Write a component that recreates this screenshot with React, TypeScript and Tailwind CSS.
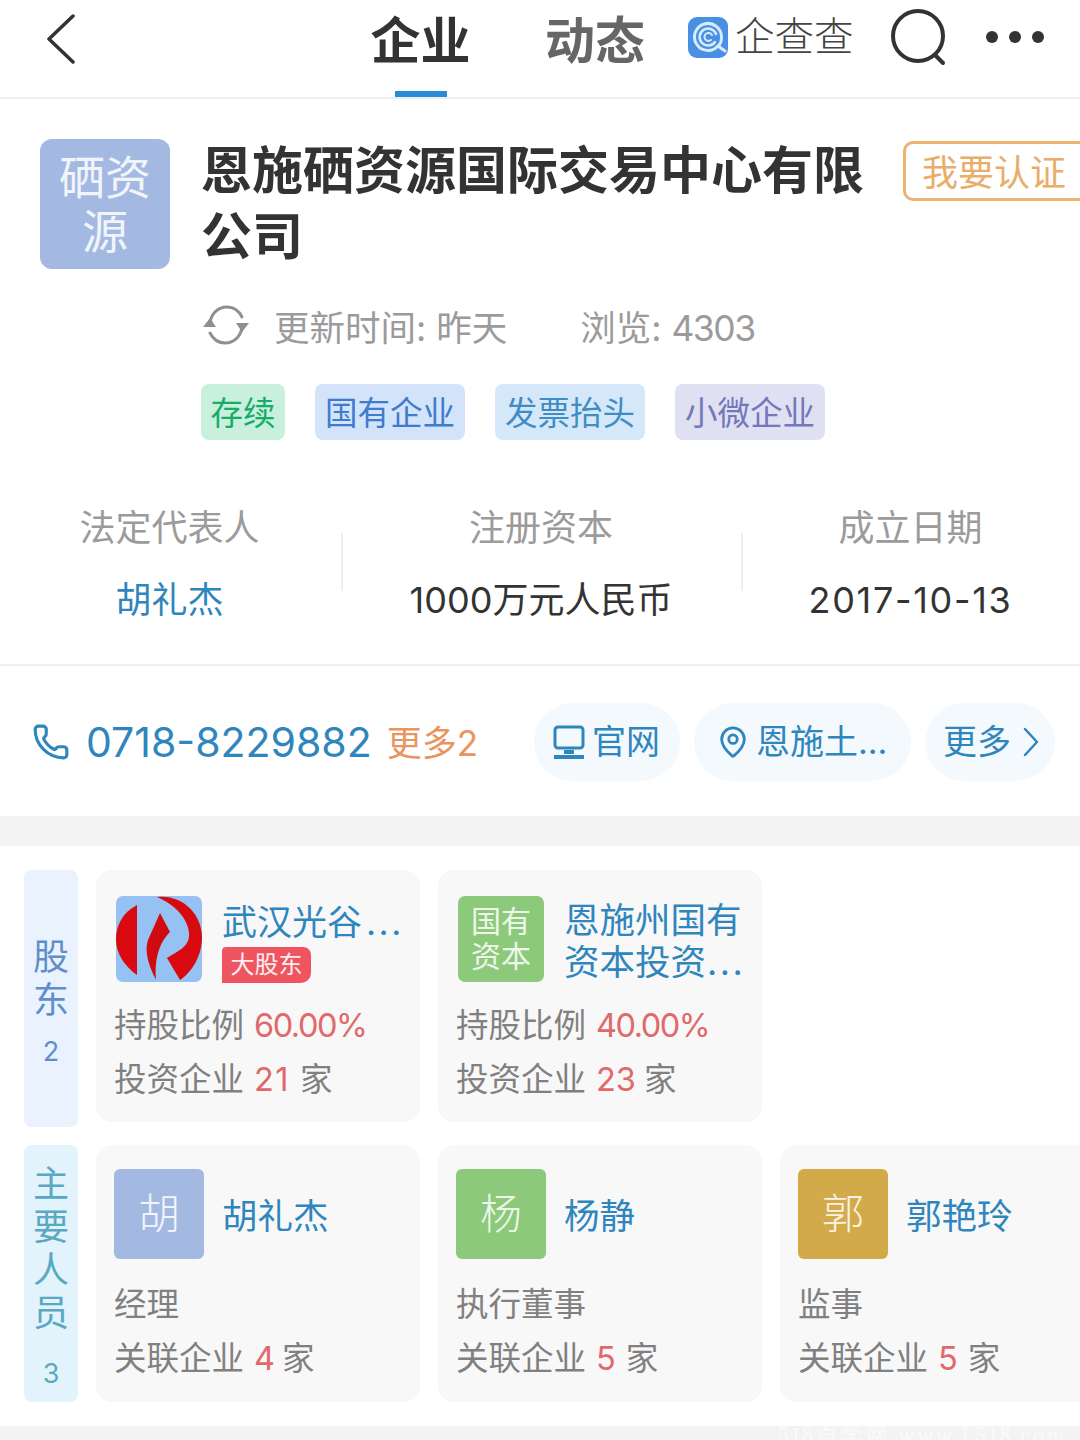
import { MapPin, Phone } from "lucide-react";

const font = { fontFamily: 'Inter, "Noto Sans CJK SC", sans-serif' };

function Tag({ text, className }: { text: string; className: string }) {
  return (
    <div className={`h-[56px] pt-[4px] rounded-[8px] flex items-center justify-center text-[32.5px] leading-none whitespace-nowrap ${className}`}>
      {text}
    </div>
  );
}

function Stat({ label, value, blue, valueClass }: { label: string; value: string; blue?: boolean; valueClass?: string }) {
  return (
    <div className="flex flex-col items-center gap-[34px]">
      <div className="text-[36px] leading-[38px] text-[#9b9b9b]">{label}</div>
      <div className={`text-[36px] leading-[38px] whitespace-nowrap ${blue ? "text-[#2f86bd]" : "text-[#333]"} ${valueClass ?? ""}`}>{value}</div>
    </div>
  );
}

function Pill({ children, className }: { children: React.ReactNode; className: string }) {
  return (
    <div className={`h-[78px] rounded-[39px] bg-[#f4f9fd] flex items-center shrink-0 text-[34px] text-[#2f86bd] whitespace-nowrap ${className}`}>
      {children}
    </div>
  );
}

function SideLabel({ chars, count, gap, className }: { chars: string[]; count: number; gap: string; className: string }) {
  return (
    <div className={`w-[54px] shrink-0 rounded-[8px] pt-[6px] flex flex-col items-center justify-center ${className}`}>
      {chars.map((c) => (
        <div key={c} className="text-[36px] leading-[43px]">{c}</div>
      ))}
      <div className={`text-[27px] leading-[32px] ${gap}`}>{count}</div>
    </div>
  );
}

function Line({ label, num, unit, numClass }: { label: string; num: string; unit?: string; numClass?: string }) {
  return (
    <div className="h-[54px] flex items-center gap-[10px] text-[32.5px] leading-none text-[#808080] whitespace-nowrap">
      <span>{label}</span>
      <span className={`text-[#e0696b] ${numClass ?? ""}`}>{num}</span>
      {unit && <span>{unit}</span>}
    </div>
  );
}

function Card({ children }: { children: React.ReactNode }) {
  return <div className="w-[324px] shrink-0 bg-[#f8f8f8] rounded-[16px] px-[18px]">{children}</div>;
}

function Person({ mark, color, name, role, count, numClass }: { mark: string; color: string; name: string; role: string; count: string; numClass?: string }) {
  return (
    <Card>
      <div className="flex items-center gap-[18px] pt-[24px]">
        <div className={`w-[90px] h-[90px] rounded-[6px] flex items-center justify-center pb-[2px] text-[42px] font-light text-white/85 ${color}`}>{mark}</div>
        <div className="pt-[6px] text-[35.5px] text-[#2f86bd]">{name}</div>
      </div>
      <div className="mt-[19px]">
        <Line label={role} num="" />
        <Line label="关联企业" num={count} unit="家" numClass={numClass} />
      </div>
    </Card>
  );
}

function HolderLogo() {
  return (
    <svg viewBox="0 0 86 86" className="w-[86px] h-[86px] shrink-0 rounded-[7px] bg-[#95c2f2]">
      <path d="M21 9 C6 17 0 30 0 43 C0 57 8 70 21 79 Z" fill="#d80a10" />
      <path d="M44 17 L54 36 C46 44 38 58 40 84 C33 70 28 56 32 44 Z" fill="#cf0a10" />
      <path d="M41 1 C66 -2 86 18 86 41 C86 60 76 76 64 84 L51 62 C64 54 74 50 73 37 C72 22 58 8 41 1 Z" fill="#d80a10" />
    </svg>
  );
}

export default function App() {
  return (
    <main className="w-[1080px] h-[1440px] overflow-hidden bg-white flex flex-col" style={font}>
      {/* top bar */}
      <header className="h-[99px] shrink-0 border-b-2 border-[#eeeeee] flex items-start">
        <svg viewBox="0 0 30 50" className="w-[30px] h-[50px] ml-[46px] mt-[14px] shrink-0" fill="none" stroke="#333" strokeWidth="3.5" strokeLinecap="round" strokeLinejoin="round">
          <path d="M27 2 L3 25 L27 48" />
        </svg>
        <div className="ml-[295px] w-[99px] h-[97px] flex flex-col items-center shrink-0">
          <div className="text-[50px] leading-[82px] font-bold text-[#333] whitespace-nowrap">企业</div>
          <div className="w-[52px] h-[6px] bg-[#2a8bd6] mt-[9px]" />
        </div>
        <div className="ml-[75px] text-[50px] leading-[82px] font-bold text-[#666] whitespace-nowrap shrink-0">动态</div>
        <svg viewBox="0 0 40 42" className="w-[40px] h-[42px] ml-[43px] mt-[17px] shrink-0" fill="none" stroke="#d6ebfb" strokeLinecap="round">
          <rect width="40" height="41" rx="9" fill="#4a90e2" stroke="none" />
          <path d="M30 29 A13.5 13.5 0 1 1 33.5 20 C33.5 24 33 27 30 29 L37 34" strokeWidth="3" />
          <path d="M27 25 A8.5 8.5 0 1 1 28 17" strokeWidth="2.5" />
          <path d="M23 23 A4 4 0 1 1 24 18" strokeWidth="2" />
        </svg>
        <div className="ml-[7px] mt-[9px] text-[39.5px] leading-[56px] font-light text-[#444] whitespace-nowrap shrink-0">企查查</div>
        <svg viewBox="0 0 58 60" className="w-[58px] h-[60px] ml-[36px] mt-[9px] shrink-0" fill="none" stroke="#333" strokeWidth="4" strokeLinecap="round">
          <circle cx="28" cy="27" r="25" />
          <path d="M45 46 L53 54" />
        </svg>
        <div className="ml-[38px] mt-[31px] flex gap-[11px] shrink-0">
          <div className="w-[12px] h-[12px] rounded-full bg-[#333]" />
          <div className="w-[12px] h-[12px] rounded-full bg-[#333]" />
          <div className="w-[12px] h-[12px] rounded-full bg-[#333]" />
        </div>
      </header>

      {/* company */}
      <section className="h-[567px] shrink-0 border-b-2 border-[#eeeeee] pt-[40px]">
        <div className="flex items-start">
          <div className="ml-[40px] w-[130px] h-[130px] rounded-[12px] bg-[#a3b9e1] flex items-center justify-center pb-[1px] text-center text-[46px] leading-[54px] text-white/85 shrink-0">
            硒资<br />源
          </div>
          <div className="ml-[31px] -mt-[1px] w-[702px] text-[51px] leading-[66px] font-bold text-[#333] shrink-0">
            恩施硒资源国际交易中心有限<br />公司
          </div>
          <div className="mt-[2px] h-[60px] w-[200px] shrink-0 border-[3px] border-[#ecb36e] rounded-[10px] pl-[16px] pt-[3px] flex items-center text-[36px] text-[#e9ad6a] whitespace-nowrap">
            我要认证
          </div>
        </div>

        <div className="flex items-center ml-[203px] mt-[31px] h-[56px] text-[35.5px] text-[#9b9b9b] whitespace-nowrap">
          <svg viewBox="0 0 46 46" className="w-[46px] h-[46px] shrink-0 -mt-[8px]" fill="none" stroke="#8f8f8f" strokeWidth="3" strokeLinecap="round">
            <path d="M7 23 C7 13 14 5 24 5 C31 5 36 9 39 15" />
            <path d="M39 23 C39 33 32 41 22 41 C15 41 10 37 7 31" />
            <path d="M0 25 L7 16 L13 25 Z" fill="#8f8f8f" stroke="none" />
            <path d="M33 21 L39 30 L46 21 Z" fill="#8f8f8f" stroke="none" />
          </svg>
          <span className="ml-[25px]">更新时间: 昨天</span>
          <span className="ml-[73px]">浏览: <span className="tracking-[-1.5px]">4303</span></span>
        </div>

        <div className="flex gap-[30px] ml-[201px] mt-[27px]">
          <Tag text="存续" className="w-[84px] bg-[#c9efdd] text-[#16ad6b]" />
          <Tag text="国有企业" className="w-[150px] bg-[#d2e3fa] text-[#3f7ccb]" />
          <Tag text="发票抬头" className="w-[150px] bg-[#d5e8f9] text-[#3f8dc4]" />
          <Tag text="小微企业" className="w-[150px] bg-[#e0e0f3] text-[#7378bb]" />
        </div>

        <div className="grid grid-cols-[341px_400px_339px] mt-[69px]">
          <div className="flex justify-center pr-[2px]"><Stat label="法定代表人" value="胡礼杰" blue /></div>
          <div className="flex justify-center relative">
            <div className="absolute left-0 top-[24px] w-[2px] h-[58px] bg-[#eeeeee]" />
            <Stat label="注册资本" value="1000万元人民币" />
          </div>
          <div className="flex justify-center relative">
            <div className="absolute left-0 top-[24px] w-[2px] h-[58px] bg-[#eeeeee]" />
            <Stat label="成立日期" value="2017-10-13" valueClass="tracking-[1.7px]" />
          </div>
        </div>
      </section>

      {/* contact */}
      <section className="h-[150px] shrink-0 flex items-center pt-[1px] pr-[25px]">
        <Phone className="w-[38px] h-[38px] ml-[32px] shrink-0 text-[#2f86bd]" strokeWidth={2} />
        <span className="ml-[16px] pt-[3px] text-[41px] text-[#2f86bd] whitespace-nowrap">0718-8229882</span>
        <span className="ml-[15px] pt-[3px] text-[35px] text-[#e8955f] whitespace-nowrap">更多2</span>
        <Pill className="ml-auto w-[146px] pl-[19px]">
          <svg viewBox="0 0 32 34" className="w-[32px] h-[34px] mr-[7px]" fill="none" stroke="#2f86bd" strokeWidth="3">
            <path d="M5 2 H27 A3 3 0 0 1 30 5 V20 A3 3 0 0 1 27 23 H5 A3 3 0 0 1 2 20 V5 A3 3 0 0 1 5 2 Z" />
            <path d="M11 27 H21 M1 32 H31" strokeWidth="4" />
          </svg>
          官网
        </Pill>
        <Pill className="ml-[14px] w-[217px] pl-[22px]">
          <MapPin className="w-[34px] h-[34px] mr-[6px]" strokeWidth={2} />
          恩施土...
        </Pill>
        <Pill className="ml-[14px] w-[130px] pl-[18px]">
          更多
          <svg viewBox="0 0 16 32" className="w-[16px] h-[32px] ml-[12px]" fill="none" stroke="#2f86bd" strokeWidth="2.5" strokeLinecap="round" strokeLinejoin="round">
            <path d="M2 3 L14 16 L2 29" />
          </svg>
        </Pill>
      </section>

      <div className="h-[30px] shrink-0 bg-[#f3f3f3]" />

      {/* shareholders */}
      <section className="flex gap-[18px] ml-[24px] mt-[24px] h-[257px] shrink-0">
        <SideLabel chars={["股", "东"]} count={2} gap="mt-[14px]" className="bg-[#e9f2fd] text-[#5f8fcb]" />
        <div className="flex gap-[18px] h-[252px]">
          <Card>
            <div className="flex gap-[20px] pt-[26px] pl-[2px] -mr-[4px]">
              <HolderLogo />
              <div className="min-w-0 pt-[5px]">
                <div className="text-[35px] leading-[42px] text-[#2f86bd] whitespace-nowrap">
                  武汉光谷<span className="ml-[4px] tracking-[2.5px]">...</span>
                </div>
                <div className="w-[89px] h-[36px] mt-[4px] bg-[#ef5560] rounded-tr-[8px] rounded-tl-[4px] rounded-br-[10px] flex items-center justify-center text-[24px] leading-none text-white/90 whitespace-nowrap">
                  大股东
                </div>
              </div>
            </div>
            <div className="pt-[16px]">
              <Line label="持股比例" num="60.00%" numClass="tracking-[-1.5px]" />
              <Line label="投资企业" num="21" unit="家" numClass="tracking-[1.5px]" />
            </div>
          </Card>
          <Card>
            <div className="flex gap-[20px] pt-[26px] pl-[2px] -mr-[4px]">
              <div className="w-[86px] h-[86px] shrink-0 rounded-[7px] bg-[#8cc97a] flex items-center justify-center text-center text-[30px] leading-[35px] text-white/85">
                国有<br />资本
              </div>
              <div className="pt-[4px] text-[35.5px] leading-[42px] text-[#2f86bd] whitespace-nowrap">
                恩施州国有<br />资本投资<span className="ml-[1px] tracking-[2.5px]">...</span>
              </div>
            </div>
            <div className="pt-[15px]">
              <Line label="持股比例" num="40.00%" numClass="tracking-[-1.5px]" />
              <Line label="投资企业" num="23" unit="家" numClass="-mr-[2px]" />
            </div>
          </Card>
        </div>
      </section>

      {/* key people */}
      <section className="flex gap-[18px] ml-[24px] mt-[18px] h-[257px] shrink-0">
        <SideLabel chars={["主", "要", "人", "员"]} count={3} gap="mt-[23px]" className="bg-[#e3f3fb] text-[#5aa9c4]" />
        <div className="flex gap-[18px]">
          <Person mark="胡" color="bg-[#a3b9e1]" name="胡礼杰" role="经理" count="4" numClass="-mr-[3px]" />
          <Person mark="杨" color="bg-[#8cc97a]" name="杨静" role="执行董事" count="5" />
          <Person mark="郭" color="bg-[#d3aa4a]" name="郭艳玲" role="监事" count="5" />
        </div>
      </section>

      <div className="mt-[24px] flex-1 bg-[#f3f3f3] overflow-hidden pl-[778px] font-serif text-[22px] leading-[20px] tracking-[3px] text-white/60 whitespace-nowrap">
        518自学网 www.L518.com
      </div>
    </main>
  );
}
